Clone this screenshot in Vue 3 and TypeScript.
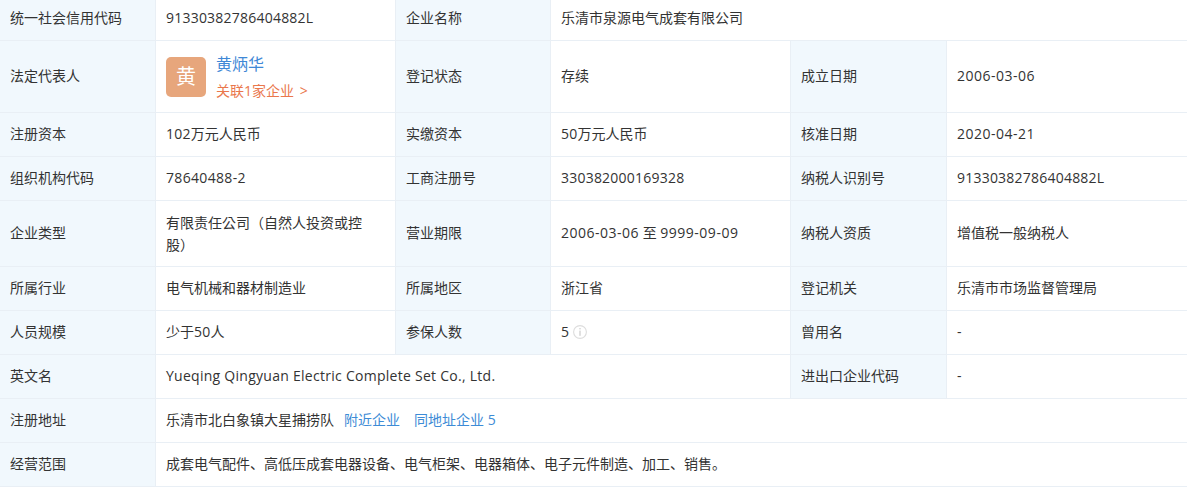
<script setup lang="ts">
const rows = 1
</script>

<template>
  <div class="page">
    <table class="info">
      <colgroup>
        <col class="c1" /><col class="c2" /><col class="c3" /><col class="c4" /><col class="c5" /><col />
      </colgroup>
      <tbody>
        <tr>
          <td class="lb">统一社会信用代码</td>
          <td><span class="num">91330382786404882L</span></td>
          <td class="lb">企业名称</td>
          <td colspan="3">乐清市泉源电气成套有限公司</td>
        </tr>
        <tr class="tall">
          <td class="lb">法定代表人</td>
          <td>
            <div class="person">
              <div class="avatar">黄</div>
              <div class="pinfo">
                <a class="name">黄炳华</a>
                <a class="rel">关联1家企业 <span class="gt">&gt;</span></a>
              </div>
            </div>
          </td>
          <td class="lb">登记状态</td>
          <td>存续</td>
          <td class="lb">成立日期</td>
          <td><span class="date">2006-03-06</span></td>
        </tr>
        <tr>
          <td class="lb">注册资本</td>
          <td><span class="num">102</span>万元人民币</td>
          <td class="lb">实缴资本</td>
          <td><span class="num">50</span>万元人民币</td>
          <td class="lb">核准日期</td>
          <td><span class="date">2020-04-21</span></td>
        </tr>
        <tr>
          <td class="lb">组织机构代码</td>
          <td><span class="code">78640488-2</span></td>
          <td class="lb">工商注册号</td>
          <td><span class="num">330382000169328</span></td>
          <td class="lb">纳税人识别号</td>
          <td><span class="num">91330382786404882L</span></td>
        </tr>
        <tr class="two">
          <td class="lb">企业类型</td>
          <td class="tc">有限责任公司（自然人投资或控股）</td>
          <td class="lb">营业期限</td>
          <td><span class="date">2006-03-06</span> 至 <span class="date">9999-09-09</span></td>
          <td class="lb">纳税人资质</td>
          <td>增值税一般纳税人</td>
        </tr>
        <tr>
          <td class="lb">所属行业</td>
          <td>电气机械和器材制造业</td>
          <td class="lb">所属地区</td>
          <td>浙江省</td>
          <td class="lb">登记机关</td>
          <td>乐清市市场监督管理局</td>
        </tr>
        <tr>
          <td class="lb">人员规模</td>
          <td>少于<span class="num">50</span>人</td>
          <td class="lb">参保人数</td>
          <td>
            <span class="count">5
              <svg class="tip" width="14" height="14" viewBox="0 0 14 14" aria-hidden="true">
                <circle cx="7" cy="7" r="6.4" fill="none" stroke="#ddd" stroke-width="1.1" />
                <rect x="6.4" y="3" width="1.2" height="1.4" fill="#ccc" />
                <rect x="6.4" y="5.6" width="1.2" height="5.2" fill="#ccc" />
              </svg>
            </span>
          </td>
          <td class="lb">曾用名</td>
          <td>-</td>
        </tr>
        <tr>
          <td class="lb">英文名</td>
          <td colspan="3"><span class="en">Yueqing Qingyuan Electric Complete Set Co., Ltd.</span></td>
          <td class="lb">进出口企业代码</td>
          <td>-</td>
        </tr>
        <tr>
          <td class="lb">注册地址</td>
          <td colspan="5">乐清市北白象镇大星捕捞队<a class="link near">附近企业</a><a class="link same">同地址企业 5</a></td>
        </tr>
        <tr>
          <td class="lb">经营范围</td>
          <td colspan="5">成套电气配件、高低压成套电器设备、电气柜架、电器箱体、电子元件制造、加工、销售。</td>
        </tr>
      </tbody>
    </table>
  </div>
</template>

<style scoped>
.page {
  width: 1187px;
  height: 493px;
  overflow: hidden;
  background: #fff;
  font-family: "Open Sans", "Noto Sans CJK SC", sans-serif;
  font-size: 14px;
  color: #333;
  text-spacing-trim: space-all;
}
.info {
  width: 1189px;
  margin: -4px 0 0 -1px;
  border-collapse: collapse;
  table-layout: fixed;
}
.c1 { width: 156px; }
.c2 { width: 240px; }
.c3 { width: 155px; }
.c4 { width: 240px; }
.c5 { width: 156px; }
td {
  height: 44px;
  padding: 0 10px 2px;
  border: 1px solid #e9eff5;
  line-height: 22px;
  box-sizing: border-box;
  vertical-align: middle;
}
.lb { background: #f1f8fd; }
.tall td { height: 72px; }
.two td { height: 66px; }
.tc { font-family: "Noto Sans CJK TC", sans-serif; }
.num { letter-spacing: 0.22px; }
.date { letter-spacing: 0.5px; }
.code { letter-spacing: 0.33px; }
.en { letter-spacing: 0.27px; }
.person { display: flex; gap: 10px; margin-bottom: -2px; }
.avatar {
  width: 40px;
  height: 40px;
  border-radius: 5px;
  background: #e7a67c;
  color: #fff;
  font-size: 20px;
  line-height: 40px;
  text-align: center;
}
.pinfo { display: flex; flex-direction: column; justify-content: space-between; height: 40px; }
.name { color: #3f88d6; font-size: 16px; line-height: 22px; margin-top: -4px; }
.rel { color: #ea774c; font-size: 14px; line-height: 20px; margin-bottom: -4px; }
.gt { margin-left: 2px; }
.count { display: inline-flex; align-items: center; gap: 4px; }
.tip { display: block; }
.link { color: #3d8bd6; }
.near { margin-left: 10px; }
.same { margin-left: 14px; }
</style>
